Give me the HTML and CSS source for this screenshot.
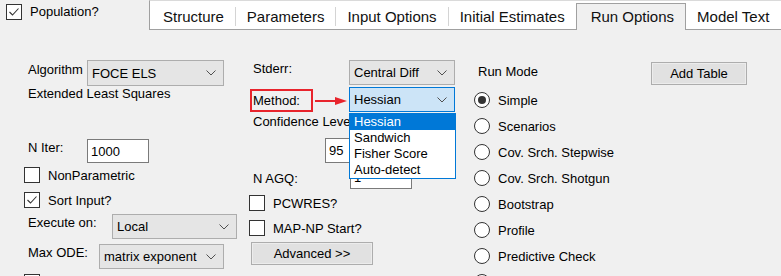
FILE: index.html
```html
<!DOCTYPE html>
<html>
<head>
  <title>Run Options</title>
  <meta name="viewport" content="width=device-width, initial-scale=1.0">
  <link rel="stylesheet" href="styles.css">
</head>
<body>
  <div class="topbar">
    <div class="check pop">
      <span class="box"><svg width="14" height="14" viewBox="0 0 14 14"><polyline points="2.5,7 5.5,10 11.5,3.5" /></svg></span>
      <span>Population?</span>
    </div>
    <div class="tabs">
      <span class="tab first">Structure</span><span class="sep"></span>
      <span class="tab">Parameters</span><span class="sep"></span>
      <span class="tab">Input Options</span><span class="sep"></span>
      <span class="tab">Initial Estimates</span>
      <span class="tab active">Run Options</span>
      <span class="tab">Model Text</span>
    </div>
  </div>

  <div class="panel">
    <!-- left column -->
    <div class="col col-left">
      <div class="row algo">
        <span class="lbl w-algo">Algorithm</span>
        <div class="select w-algo-sel"><span>FOCE ELS</span><svg class="chev" width="10" height="6" viewBox="0 0 10 6"><polyline points="0.5,0.5 5,5 9.5,0.5" /></svg></div>
      </div>
      <div class="note">Extended Least Squares</div>
      <div class="row niter">
        <span class="lbl w-algo pt1">N Iter:</span>
        <div class="input w-niter">1000</div>
      </div>
      <div class="check c-nonpar"><span class="box"></span><span>NonParametric</span></div>
      <div class="check c-sort">
        <span class="box"><svg width="14" height="14" viewBox="0 0 14 14"><polyline points="2.5,7 5.5,10 11.5,3.5" /></svg></span>
        <span>Sort Input?</span>
      </div>
      <div class="row exec">
        <span class="lbl w-exec pt1">Execute on:</span>
        <div class="select w-exec-sel"><span>Local</span><svg class="chev" width="10" height="6" viewBox="0 0 10 6"><polyline points="0.5,0.5 5,5 9.5,0.5" /></svg></div>
      </div>
      <div class="row maxode">
        <span class="lbl w-ode pt1">Max ODE:</span>
        <div class="select w-exec-sel"><span>matrix exponent</span><svg class="chev" width="10" height="6" viewBox="0 0 10 6"><polyline points="0.5,0.5 5,5 9.5,0.5" /></svg></div>
      </div>
      <div class="check c-last"><span class="box"></span><span>Synchronize Sort Steps</span></div>
    </div>

    <!-- middle column -->
    <div class="col col-mid">
      <div class="row stderr">
        <span class="lbl w-stderr pt1">Stderr:</span>
        <div class="select w-mid-sel"><span>Central Diff</span><svg class="chev" width="10" height="6" viewBox="0 0 10 6"><polyline points="0.5,0.5 5,5 9.5,0.5" /></svg></div>
      </div>
      <div class="row method">
        <span class="callout">Method:</span>
        <svg class="arrow" width="36" height="25" viewBox="0 0 36 25">
          <line x1="2" y1="14" x2="24" y2="14" />
          <polygon points="22,10 34,14 22,18" />
        </svg>
        <div class="select focused w-mid-sel">
          <span>Hessian</span><svg class="chev" width="10" height="6" viewBox="0 0 10 6"><polyline points="0.5,0.5 5,5 9.5,0.5" /></svg>
          <ul class="droplist">
            <li class="hl">Hessian</li>
            <li>Sandwich</li>
            <li>Fisher Score</li>
            <li>Auto-detect</li>
          </ul>
        </div>
      </div>
      <div class="note conf">Confidence Level:</div>
      <div class="row conf-row">
        <div class="input w-conf">95</div>
      </div>
      <div class="row nagq">
        <span class="lbl w-nagq">N AGQ:</span>
        <div class="input w-niter top-text">1</div>
      </div>
      <div class="check c-pcwres"><span class="box"></span><span>PCWRES?</span></div>
      <div class="check c-mapnp"><span class="box"></span><span>MAP-NP Start?</span></div>
      <div class="btn btn-adv">Advanced &gt;&gt;</div>
    </div>

    <!-- right column -->
    <div class="col col-right">
      <div class="row runmode">
        <span class="lbl w-runmode">Run Mode</span>
        <div class="btn btn-add">Add Table</div>
      </div>
      <div class="radios">
        <div class="radio"><span class="dot on"></span><span>Simple</span></div>
        <div class="radio"><span class="dot"></span><span>Scenarios</span></div>
        <div class="radio"><span class="dot"></span><span>Cov. Srch. Stepwise</span></div>
        <div class="radio"><span class="dot"></span><span>Cov. Srch. Shotgun</span></div>
        <div class="radio"><span class="dot"></span><span>Bootstrap</span></div>
        <div class="radio"><span class="dot"></span><span>Profile</span></div>
        <div class="radio"><span class="dot"></span><span>Predictive Check</span></div>
        <div class="radio"><span class="dot"></span><span>Simulation</span></div>
      </div>
    </div>
  </div>
</body>
</html>
```

FILE: styles.css
```css
html, body {
  margin: 0;
  padding: 0;
}
body {
  width: 781px;
  height: 276px;
  overflow: hidden;
  background-color: #f0f0f0;
  font-family: "Liberation Sans", Arial, sans-serif;
  font-size: 13px;
  line-height: 15px;
  color: #000;
}

/* header: population checkbox + tab strip */
.topbar {
  display: flex;
  height: 30px;
}
.pop {
  width: 149px;
  flex: none;
  box-sizing: border-box;
  padding: 7px 0 0 6px;
  align-self: flex-start;
}
.tabs {
  flex: 1;
  display: flex;
  align-items: flex-end;
  height: 30px;
  box-sizing: border-box;
  background-color: #fff;
  border-top: 1px solid #dadada;
  border-left: 1px solid #a0a0a0;
  border-bottom: 1px solid #a0a0a0;
  white-space: nowrap;
  overflow: visible;
}
.tab {
  height: 28px;
  box-sizing: border-box;
  padding: 7px 11px 0 11px;
  font-size: 15px;
  line-height: 17px;
  color: #111;
}
.tab.first {
  padding-left: 13px;
}
.tab.active {
  height: 27px;
  margin-bottom: -1px;
  padding: 4px 11px 0 14px;
  background-color: #f0f0f0;
  border: 1px solid #a0a0a0;
  border-bottom: none;
}
.sep {
  align-self: flex-start;
  margin-top: 6px;
  width: 1px;
  height: 19px;
  background-color: #d4d4d4;
}

/* main panel */
.panel {
  display: flex;
}
.col {
  display: flex;
  flex-direction: column;
  flex: none;
}
.col-left {
  width: 225px;
  padding-left: 24px;
}
.col-mid {
  width: 225px;
}
.col-right {
  flex: 1;
}
.row {
  display: flex;
  align-items: flex-start;
}
.lbl {
  flex: none;
  box-sizing: border-box;
  padding-left: 4px;
  padding-top: 2px;
}
.pt1 {
  padding-top: 1px;
}
.note {
  padding-left: 4px;
  white-space: nowrap;
}

/* controls */
.select {
  position: relative;
  display: flex;
  align-items: center;
  justify-content: space-between;
  box-sizing: border-box;
  height: 25px;
  padding: 0 7px 0 4px;
  background-color: #e5e5e5;
  border: 1px solid #adadad;
  white-space: nowrap;
}
.select.focused {
  background-color: #cce4f7;
  border-color: #0078d7;
}
.chev polyline {
  fill: none;
  stroke: #505050;
  stroke-width: 1;
}
.input {
  box-sizing: border-box;
  height: 24px;
  padding: 0 3px;
  display: flex;
  align-items: center;
  background-color: #fff;
  border: 1px solid #7a7a7a;
}
.input.top-text {
  align-items: flex-start;
  padding-top: 4px;
}
.check {
  display: flex;
  align-items: center;
  height: 16px;
  white-space: nowrap;
}
.box {
  flex: none;
  width: 16px;
  height: 16px;
  box-sizing: border-box;
  margin-right: 8px;
  background-color: #fff;
  border: 1px solid #333;
  display: flex;
  align-items: center;
  justify-content: center;
}
.box polyline {
  fill: none;
  stroke: #333;
  stroke-width: 1.1;
}
.btn {
  box-sizing: border-box;
  height: 23px;
  display: flex;
  align-items: center;
  justify-content: center;
  background-color: #e1e1e1;
  border: 1px solid #adadad;
  box-shadow: inset 0 0 0 1px #ececec;
}

/* left column placement */
.algo {
  margin-top: 30px;
  height: 26px;
}
.algo .select {
  height: 26px;
}
.w-algo { width: 63px; }
.w-algo-sel { width: 137px; }
.niter {
  margin-top: 38px;
}
.w-niter { width: 62px; }
.c-nonpar { margin-top: 4px; }
.c-sort { margin-top: 9px; }
.exec { margin-top: 6px; }
.w-exec { width: 88px; }
.w-exec-sel { width: 125px; }
.maxode { margin-top: 5px; }
.w-ode { width: 75px; }
.c-last { margin-top: 5px; }

/* middle column placement */
.stderr { margin-top: 30px; }
.w-stderr { width: 100px; }
.w-mid-sel { width: 106px; }
.method {
  margin-top: 2px;
}
.callout {
  margin-left: 1px;
  margin-top: 2px;
  width: 63px;
  height: 23px;
  box-sizing: border-box;
  padding: 2px 0 0 1px;
  border: 2px solid #e8242c;
}
.arrow {
  flex: none;
}
.arrow line {
  stroke: #e8242c;
  stroke-width: 2;
}
.arrow polygon {
  fill: #e8242c;
}
.droplist {
  position: absolute;
  z-index: 10;
  top: 25px;
  left: -1px;
  width: 107px;
  box-sizing: border-box;
  margin: 0;
  padding: 0;
  list-style: none;
  background-color: #fff;
  border: 1px solid #0078d7;
}
.droplist li {
  height: 16px;
  line-height: 16px;
  padding-left: 4px;
}
.droplist li.hl {
  background-color: #0078d7;
  color: #fff;
}
.conf {
  margin-top: 2px;
}
.conf-row {
  margin-top: 9px;
}
.w-conf {
  width: 60px;
  height: 25px;
  margin-left: 76px;
}
.nagq { margin-top: 2px; }
.w-nagq {
  width: 101px;
  padding-top: 6px;
}
.c-pcwres { margin-top: 6px; }
.c-mapnp { margin-top: 9px; }
.btn-adv {
  margin-top: 6px;
  margin-left: 2px;
  width: 122px;
}

/* right column placement */
.runmode { margin-top: 32px; }
.w-runmode { width: 177px; }
.btn-add { width: 96px; }
.radios {
  margin-top: 2px;
}
.radio {
  display: flex;
  align-items: center;
  height: 26px;
  white-space: nowrap;
}
.dot {
  flex: none;
  width: 16px;
  height: 16px;
  box-sizing: border-box;
  margin-right: 8px;
  border: 1px solid #333;
  border-radius: 50%;
  background-color: #fff;
  display: flex;
  align-items: center;
  justify-content: center;
}
.dot.on::after {
  content: "";
  width: 8px;
  height: 8px;
  border-radius: 50%;
  background-color: #333;
}
```
